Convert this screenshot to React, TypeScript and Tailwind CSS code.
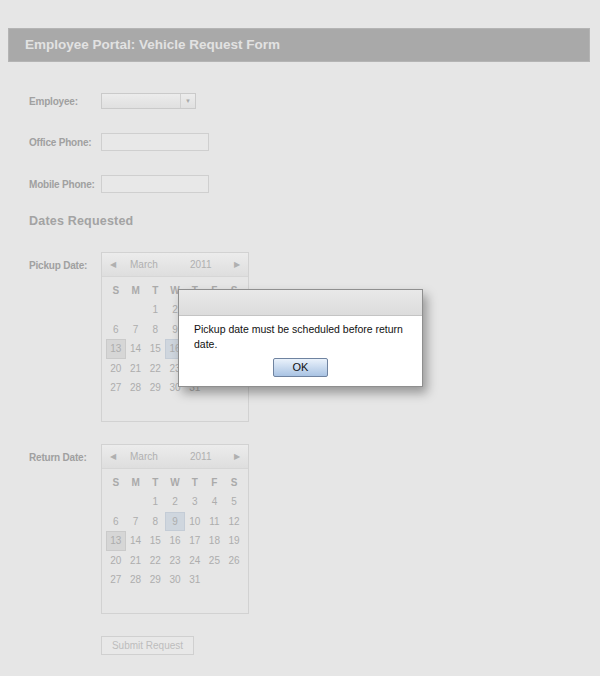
import React from 'react'

const labelCls = "w-[72px] shrink-0 text-[10px] font-bold text-[#a0a0a0] tracking-[-0.2px]"

function Calendar({ marks }: { marks: Record<number, 'gray' | 'blue'> }) {
  const days = ['S', 'M', 'T', 'W', 'T', 'F', 'S']
  // March 2011 starts on a Tuesday
  const cells: (number | null)[] = [null, null]
  for (let d = 1; d <= 31; d++) cells.push(d)
  while (cells.length < 42) cells.push(null)

  return (
    <div className="w-[148px] h-[170px] border border-[#d2d2d2] bg-[#e6e6e6]">
      <div className="h-[24px] flex items-center px-[8px] text-[10px] text-[#b0b0b0] border-b border-[#d6d6d6] bg-gradient-to-b from-[#ececec] to-[#dedede]">
        <span className="text-[8px] w-[20px]">◀</span>
        <span className="w-[60px]">March</span>
        <span className="flex-1">2011</span>
        <span className="text-[8px]">▶</span>
      </div>
      <div className="grid grid-cols-7 px-[4px] pt-[3px]">
        {days.map((d, i) => (
          <div key={i} className="h-[20px] flex items-center justify-center text-[10px] font-bold text-[#aaaaaa]">
            {d}
          </div>
        ))}
        {cells.slice(0, 35).map((c, i) => (
          <div
            key={i}
            className={
              "h-[19.5px] flex items-center justify-center text-[10px] text-[#adadad] " +
              (c && marks[c] === 'gray'
                ? 'bg-[#d6d6d6] border border-[#cacaca]'
                : c && marks[c] === 'blue'
                ? 'bg-[#cfd6de] border border-[#c4ccd6]'
                : '')
            }
          >
            {c ?? ''}
          </div>
        ))}
      </div>
    </div>
  )
}

export default function App() {
  return (
    <div
      className="relative w-[600px] h-[676px] bg-[#e6e6e6] pt-[28px] overflow-hidden"
      style={{ fontFamily: '"Liberation Sans", Arial, sans-serif' }}
    >
      {/* Header */}
      <div className="ml-[8px] mr-[10px] h-[34px] bg-[#a9a9a9] border border-[#b4b4b4] flex items-center pl-[16px]">
        <h1 className="text-[13.5px] font-bold text-[#e2e2e2]">Employee Portal: Vehicle Request Form</h1>
      </div>

      {/* Form */}
      <div className="pl-[29px]">
        <div className="mt-[31px] flex items-center h-[16px]">
          <span className={labelCls}>Employee:</span>
          <div className="w-[95px] h-[16px] border border-[#cacaca] bg-gradient-to-b from-[#ececec] to-[#e0e0e0] flex">
            <div className="flex-1" />
            <div className="w-[15px] border-l border-[#d0d0d0] flex items-center justify-center text-[6px] text-[#aaa]">▼</div>
          </div>
        </div>

        <div className="mt-[24px] flex items-center h-[18px]">
          <span className={labelCls}>Office Phone:</span>
          <div className="w-[108px] h-[18px] border border-[#cfcfcf] bg-[#e8e8e8]" />
        </div>

        <div className="mt-[24px] flex items-center h-[18px]">
          <span className={labelCls}>Mobile Phone:</span>
          <div className="w-[108px] h-[18px] border border-[#cfcfcf] bg-[#e8e8e8]" />
        </div>

        <h2 className="mt-[19px] h-[18px] text-[12.5px] font-bold text-[#a3a3a3] tracking-[0.2px]">Dates Requested</h2>

        <div className="mt-[22px] flex items-start">
          <span className={labelCls + " mt-[6px]"}>Pickup Date:</span>
          <Calendar marks={{ 13: 'gray', 16: 'blue' }} />
        </div>

        <div className="mt-[22px] flex items-start">
          <span className={labelCls + " mt-[6px]"}>Return Date:</span>
          <Calendar marks={{ 13: 'gray', 9: 'blue' }} />
        </div>

        <div className="mt-[22px] pl-[72px]">
          <div className="w-[93px] h-[19px] border border-[#d0d0d0] bg-[#e8e8e8] flex items-center justify-center text-[10px] text-[#bdbdbd]">
            Submit Request
          </div>
        </div>
      </div>

      {/* Dialog */}
      <div className="absolute left-[178px] top-[289px] w-[245px] h-[98px] border border-[#8f8f8f] bg-white shadow-[4px_6px_10px_rgba(0,0,0,0.35)] flex flex-col">
        <div className="h-[26px] bg-gradient-to-b from-[#e9e9e9] to-[#dcdcdc] border-b border-[#c4c4c4]" />
        <div className="flex-1 px-[15px] pt-[6px]">
          <p className="text-[10.5px] leading-[15px] text-[#111]">Pickup date must be scheduled before return date.</p>
          <div className="mt-[6px] flex justify-center">
            <div className="w-[55px] h-[19px] rounded-[2px] border border-[#6f83a0] bg-gradient-to-b from-[#eaf2fb] to-[#a9c3e3] flex items-center justify-center text-[11px] text-[#111]">
              OK
            </div>
          </div>
        </div>
      </div>
    </div>
  )
}
